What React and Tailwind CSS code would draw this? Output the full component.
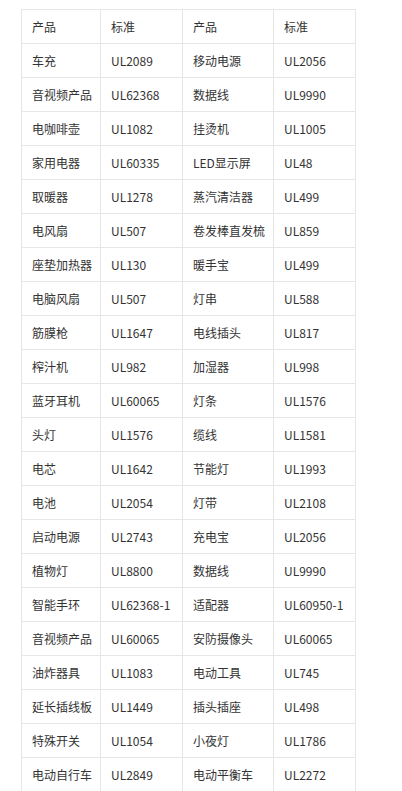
const rows = [
  ["产品", "标准", "产品", "标准"],
  ["车充", "UL2089", "移动电源", "UL2056"],
  ["音视频产品", "UL62368", "数据线", "UL9990"],
  ["电咖啡壶", "UL1082", "挂烫机", "UL1005"],
  ["家用电器", "UL60335", "LED显示屏", "UL48"],
  ["取暖器", "UL1278", "蒸汽清洁器", "UL499"],
  ["电风扇", "UL507", "卷发棒直发梳", "UL859"],
  ["座垫加热器", "UL130", "暖手宝", "UL499"],
  ["电脑风扇", "UL507", "灯串", "UL588"],
  ["筋膜枪", "UL1647", "电线插头", "UL817"],
  ["榨汁机", "UL982", "加湿器", "UL998"],
  ["蓝牙耳机", "UL60065", "灯条", "UL1576"],
  ["头灯", "UL1576", "缆线", "UL1581"],
  ["电芯", "UL1642", "节能灯", "UL1993"],
  ["电池", "UL2054", "灯带", "UL2108"],
  ["启动电源", "UL2743", "充电宝", "UL2056"],
  ["植物灯", "UL8800", "数据线", "UL9990"],
  ["智能手环", "UL62368-1", "适配器", "UL60950-1"],
  ["音视频产品", "UL60065", "安防摄像头", "UL60065"],
  ["油炸器具", "UL1083", "电动工具", "UL745"],
  ["延长插线板", "UL1449", "插头插座", "UL498"],
  ["特殊开关", "UL1054", "小夜灯", "UL1786"],
  ["电动自行车", "UL2849", "电动平衡车", "UL2272"],
];

const App = () => {
  return (
    <div className="min-h-[791px] bg-white pl-[21px] pt-[9px] font-['Noto_Sans_CJK_SC','Noto_Sans',sans-serif] text-[12px] text-[#333]">
      <table className="w-[334px] table-fixed border-collapse">
        <colgroup>
          <col className="w-[79px]" />
          <col className="w-[82px]" />
          <col className="w-[91px]" />
          <col className="w-[82px]" />
        </colgroup>
        <tbody>
          {rows.map((row, i) => (
            <tr key={i}>
              {row.map((cell, j) => (
                <td
                  key={j}
                  className="h-[34px] whitespace-nowrap border border-[#e6e6e6] py-0 pl-[10px] pr-0 align-middle leading-none"
                >
                  {cell}
                </td>
              ))}
            </tr>
          ))}
        </tbody>
      </table>
    </div>
  );
};

export default App;
